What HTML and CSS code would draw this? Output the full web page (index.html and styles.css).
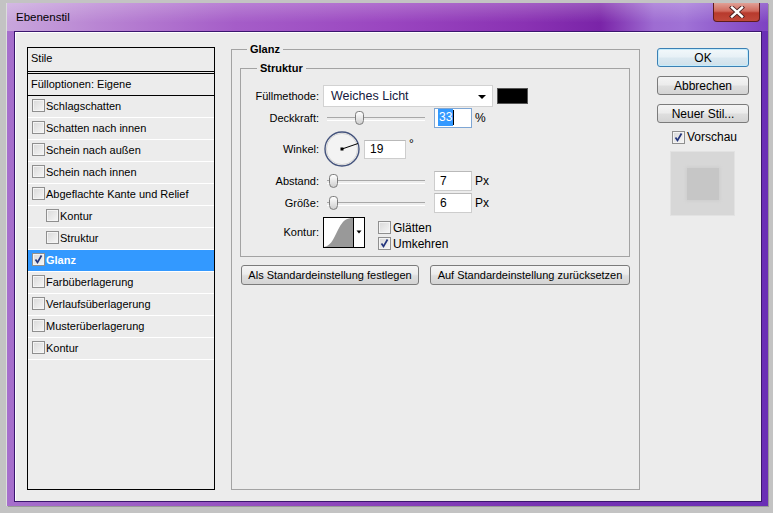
FILE: index.html
```html
<!DOCTYPE html>
<html lang="de">
  <head>
    <meta charset="UTF-8" />
    <title>Ebenenstil</title>
    <link rel="stylesheet" href="styles.css">
  </head>
  <body>
    <div class="window">
      <!-- Titelleiste -->
      <div class="titlebar">
        <span class="title">Ebenenstil</span>
        <a href="javascript:;" class="close">
          <svg width="16" height="12" viewBox="0 0 16 12">
            <path d="M3 1.5 L13 10.5 M13 1.5 L3 10.5" stroke="#4a2020" stroke-width="4.2" stroke-linecap="square" />
            <path d="M3 1.5 L13 10.5 M13 1.5 L3 10.5" stroke="#fff" stroke-width="2.4" stroke-linecap="square" />
          </svg>
        </a>
      </div>

      <div class="client">
        <!-- Stilliste -->
        <ul class="styles">
          <li class="head">Stile</li>
          <li class="fill">Fülloptionen: Eigene</li>
          <li><span class="cb"></span>Schlagschatten</li>
          <li><span class="cb"></span>Schatten nach innen</li>
          <li><span class="cb"></span>Schein nach außen</li>
          <li><span class="cb"></span>Schein nach innen</li>
          <li><span class="cb"></span>Abgeflachte Kante und Relief</li>
          <li class="sub"><span class="cb"></span>Kontur</li>
          <li class="sub"><span class="cb"></span>Struktur</li>
          <li class="active"><span class="cb"><svg width="11" height="11" viewBox="0 0 11 11"><path d="M2.5 5.5 L4.5 8.5 L8.5 1.5" fill="none" stroke="#23357d" stroke-width="1.7" /></svg></span>Glanz</li>
          <li><span class="cb"></span>Farbüberlagerung</li>
          <li><span class="cb"></span>Verlaufsüberlagerung</li>
          <li><span class="cb"></span>Musterüberlagerung</li>
          <li><span class="cb"></span>Kontur</li>
        </ul>

        <!-- Glanz -->
        <fieldset class="group glanz">
          <legend>Glanz</legend>
          <fieldset class="group struktur">
            <legend>Struktur</legend>

            <div class="row r-blend">
              <label>Füllmethode:</label>
              <div class="select">Weiches Licht<span class="arrow"></span></div>
              <span class="swatch"></span>
            </div>

            <div class="row r-slide">
              <label>Deckkraft:</label>
              <div class="slider"><span class="thumb" style="left: 32px"></span></div>
              <div class="field focus"><span class="sel">33</span><span class="caret"></span></div>
              <span class="unit">%</span>
            </div>

            <div class="row r-angle">
              <label>Winkel:</label>
              <svg class="dial" width="38" height="38" viewBox="0 0 38 38">
                <circle cx="19" cy="19" r="17" fill="#f3f3f3" stroke="#44537c" stroke-width="1.4" />
                <circle cx="19" cy="19" r="15.6" fill="none" stroke="#d4d4d4" stroke-width="1" />
                <line x1="19" y1="19" x2="35" y2="13.5" stroke="#000" stroke-width="1" />
                <rect x="17.5" y="17.5" width="3" height="3" fill="#000" />
              </svg>
              <div class="field wide"><span>19</span></div>
              <span class="unit deg">°</span>
            </div>

            <div class="row r-slide">
              <label>Abstand:</label>
              <div class="slider"><span class="thumb" style="left: 6px"></span></div>
              <div class="field"><span>7</span></div>
              <span class="unit">Px</span>
            </div>

            <div class="row r-slide">
              <label>Größe:</label>
              <div class="slider"><span class="thumb" style="left: 6px"></span></div>
              <div class="field"><span>6</span></div>
              <span class="unit">Px</span>
            </div>

            <div class="row r-contour">
              <label>Kontur:</label>
              <svg class="contour" width="42" height="31" viewBox="0 0 42 31">
                <rect x="0.5" y="0.5" width="41" height="30" fill="#fff" stroke="#000" />
                <path d="M1 30 C 9 29, 12 18, 16 11 S 22 2, 28 1 L 30 1 L 30 30 Z" fill="#999" />
                <line x1="30.5" y1="1" x2="30.5" y2="30" stroke="#000" />
                <path d="M33.5 13.5 L38.5 13.5 L36 16.5 Z" fill="#000" />
              </svg>
              <div class="checks">
                <div class="check"><span class="cb"></span>Glätten</div>
                <div class="check"><span class="cb"><svg width="11" height="11" viewBox="0 0 11 11"><path d="M2.5 5.5 L4.5 8.5 L8.5 1.5" fill="none" stroke="#23357d" stroke-width="1.7" /></svg></span>Umkehren</div>
              </div>
            </div>
          </fieldset>

          <div class="defaults">
            <button class="btn set">Als Standardeinstellung festlegen</button>
            <button class="btn reset">Auf Standardeinstellung zurücksetzen</button>
          </div>
        </fieldset>

        <!-- Schaltflächen rechts -->
        <div class="side">
          <button class="btn big default">OK</button>
          <button class="btn big">Abbrechen</button>
          <button class="btn big">Neuer Stil...</button>
          <div class="check preview-check"><span class="cb"><svg width="11" height="11" viewBox="0 0 11 11"><path d="M2.5 5.5 L4.5 8.5 L8.5 1.5" fill="none" stroke="#23357d" stroke-width="1.7" /></svg></span>Vorschau</div>
          <div class="preview"><span class="swatch-inner"></span></div>
        </div>
      </div>
    </div>
  </body>
</html>
```

FILE: styles.css
```css
* {
  margin: 0;
  padding: 0;
  box-sizing: border-box;
}
ul {
  list-style: none;
}

body {
  width: 773px;
  height: 513px;
  overflow: hidden;
  background: #c3c3c3;
  font: 11px "Liberation Sans", Arial, sans-serif;
  color: #000;
}

.window {
  display: flex;
  flex-direction: column;
  width: 761px;
  height: 503px;
  margin: 3px 5px 0 7px;
  background: linear-gradient(90deg, #a66fcc 0%, #9048bd 40%, #7733b2 70%, #6a2eb6 100%);
  box-shadow: -1px 0 0 #dcdcdc, 1px 1px 0 #9a9a9a;
}

/* Titelleiste */
.titlebar {
  display: flex;
  justify-content: space-between;
  height: 28px;
  padding-left: 9px;
  background:
    linear-gradient(180deg, rgba(255, 255, 255, 0.22), rgba(255, 255, 255, 0) 70%),
    linear-gradient(90deg, #c8a6dc 0%, #b985d3 12%, #a55dc8 30%, #9a46c0 50%, #8a32b3 68%, #7a24a8 78%, #9e6cd2 85%, #a072d6 89%, #7e42c2 100%);
}
.titlebar .title {
  align-self: center;
  font-size: 11.5px;
  color: #000;
}
.titlebar .close {
  display: flex;
  align-items: center;
  justify-content: center;
  width: 47px;
  height: 19px;
  margin-right: 8px;
  border: 1px solid #5e1c1c;
  border-top: none;
  border-radius: 0 0 4px 4px;
  background: linear-gradient(180deg, #e0a096 0%, #d0695c 45%, #b83a2d 55%, #c0483a 100%);
}

.client {
  display: flex;
  flex: 1;
  margin: 0 6px 4px 7px;
  padding: 15px 12px 11px 12px;
  background: #ececec;
  border: 1px solid #3a166e;
  box-shadow: inset 1px 1px 0 #fff;
}

/* Stilliste */
.styles {
  width: 188px;
  background: #ececec;
  border: 1px solid #000;
}
.styles li {
  display: flex;
  align-items: center;
  height: 22px;
  padding: 0 0 2px 4px;
  border-bottom: 1px solid #fff;
}
.styles li.head {
  height: 26px;
  padding: 0 0 3px 3px;
  border-bottom: 3px double #000;
}
.styles li.fill {
  padding-left: 3px;
  border-bottom: 1px solid #000;
}
.styles li.sub {
  padding-left: 18px;
}
.styles li.active {
  background: #3399ff;
  color: #fff;
  font-weight: bold;
}
.styles .cb {
  margin-right: 1px;
}

.cb {
  display: inline-flex;
  align-items: center;
  justify-content: center;
  flex: none;
  width: 13px;
  height: 13px;
  margin-right: 2px;
  border: 1px solid #8f8f8f;
  background: linear-gradient(135deg, #d9d9d9 0%, #f6f6f6 100%);
  box-shadow: inset 0 0 0 1px #f4f4f4;
}

/* Gruppen */
.group {
  min-width: 0;
  border: 1px solid #a3a3a3;
}
.group legend {
  line-height: 13px;
  padding: 0 3px;
  font-weight: bold;
}
.glanz {
  width: 409px;
  margin: -4px 0 0 16px;
  padding: 6px 9px 0 8px;
}
.glanz > legend {
  margin-left: 7px;
}
.struktur {
  padding: 10px 0 6px 0;
}
.struktur > legend {
  margin-left: 16px;
}

.row {
  display: flex;
  align-items: center;
  height: 22px;
}
.row label {
  width: 78px;
  margin-right: 4px;
  text-align: right;
}
.r-blend + .r-slide {
  height: 21px;
}
.row.r-angle {
  height: 42px;
}
.row.r-contour {
  height: 36px;
}

.select {
  display: flex;
  align-items: center;
  position: relative;
  width: 170px;
  height: 22px;
  padding-left: 7px;
  background: #fff;
  border: 1px solid #d2d2d2;
  font-size: 12.5px;
  color: #15183c;
}
.select .arrow {
  position: absolute;
  right: 6px;
  top: 9px;
  border: 4px solid transparent;
  border-top: 4px solid #000;
  border-bottom: none;
}
.swatch {
  width: 31px;
  height: 16px;
  margin-left: 4px;
  background: #000;
  border: 1px solid #555;
}

.slider {
  position: relative;
  width: 105px;
  height: 16px;
}
.slider::before {
  content: "";
  position: absolute;
  left: 4px;
  right: 3px;
  top: 7px;
  height: 2px;
  border-top: 1px solid #a8a8a8;
  border-bottom: 1px solid #fff;
}
.slider .thumb {
  position: absolute;
  top: 1px;
  width: 9px;
  height: 14px;
  border: 1px solid #7c7c7c;
  border-radius: 4px 4px 5px 5px;
  background: linear-gradient(180deg, #ffffff 0%, #e2e2e2 60%, #cfcfcf 100%);
}

.field {
  display: flex;
  align-items: center;
  width: 38px;
  height: 20px;
  margin-left: 6px;
  padding-left: 5px;
  background: #fff;
  border: 1px solid #cdcdcd;
  border-top-color: #b9b9b9;
  font-size: 12px;
}
.field.focus {
  padding-left: 3px;
  border-color: #7ea6d4;
}
.field .sel {
  padding: 1px 1px 2px;
  background: #3399ff;
  color: #fff;
}
.field .caret {
  width: 1px;
  height: 15px;
  background: #000;
}
.field.wide {
  width: 42px;
  height: 19px;
  margin-left: 3px;
}
.unit {
  margin-left: 3px;
  font-size: 12px;
}
.unit.deg {
  align-self: flex-start;
  margin-top: 9px;
}

.checks {
  display: flex;
  flex-direction: column;
  gap: 3px;
  align-self: flex-start;
  margin: 7px 0 0 13px;
  font-size: 12px;
}
.check {
  display: flex;
  align-items: center;
  height: 13px;
}

/* Schaltflächen */
.btn {
  height: 20px;
  border: 1px solid #7b7b7b;
  border-radius: 3px;
  background: linear-gradient(180deg, #f4f4f4 0%, #ececec 45%, #dedede 55%, #d4d4d4 100%);
  font: 11px "Liberation Sans", Arial, sans-serif;
  color: #000;
}
.defaults {
  display: flex;
  gap: 11px;
  margin: 8px 0 0 1px;
}
.btn.set {
  width: 178px;
}
.btn.reset {
  width: 200px;
}

.side {
  display: flex;
  flex-direction: column;
  width: 92px;
  margin-left: 17px;
  padding-top: 1px;
}
.btn.big {
  height: 19px;
  margin-bottom: 9px;
  font-size: 12px;
}
.btn.default {
  border-color: #3b80b4;
  box-shadow: inset 0 0 0 1px #c4ecfc;
  background: linear-gradient(180deg, #f2f8fb 0%, #e8f1f6 45%, #dae8f0 55%, #d0e0ea 100%);
}
.preview-check {
  height: 14px;
  margin: -2px 0 0 15px;
  font-size: 12px;
}
.preview {
  display: flex;
  align-items: center;
  justify-content: center;
  width: 65px;
  height: 65px;
  margin: 7px 0 0 13px;
  background: #d7d7d7;
  border: 1px solid #e2e2e2;
}
.preview .swatch-inner {
  width: 32px;
  height: 32px;
  background: #c6c6c6;
  box-shadow: 0 0 3px 1px #cecece;
}
```
